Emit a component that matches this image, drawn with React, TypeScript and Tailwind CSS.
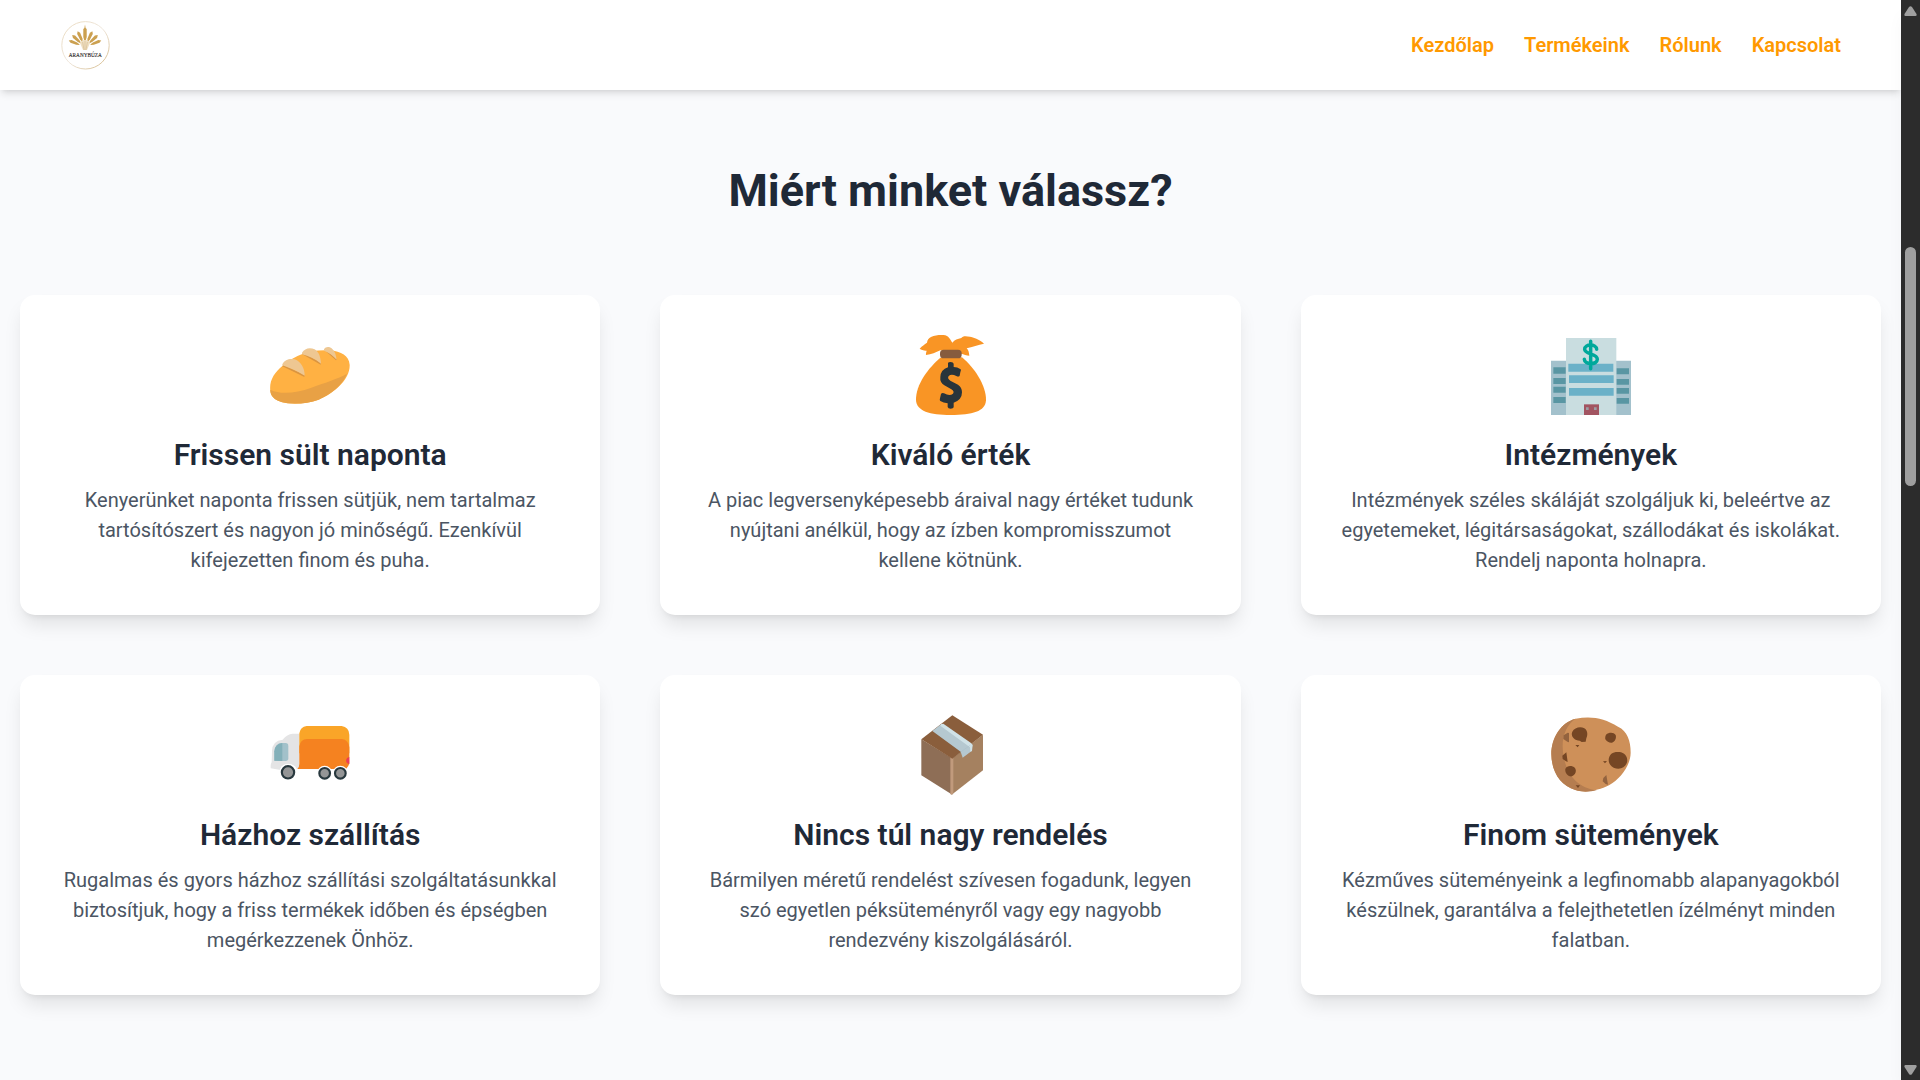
import React from "react";

const Bread = () => (
  <svg className="size-20" viewBox="60 45 240 240">
    <path d="M61 213C57 182 73 158 97 138C121 119 137 109 157 102C180 92 206 90 239 91C274 94 297 108 299 134C301 178 253 220 206 239C148 259 64 256 61 213Z" fill="#FFB143" />
    <path d="M61 209C91 224 137 220 184 203C228 187 262 177 291 161C277 196 242 223 206 239C148 259 59 256 61 209Z" fill="#E8A145" />
    <path d="M97 139L163 171L164 165L100 134ZM157 103L212 134L213 128L160 98ZM223 90L258 121L261 118L228 86Z" fill="#DB9540" />
    <path d="M97 133C105 117 120 115 134 118C153 125 164 144 164 167C140 153 118 143 97 136ZM156 98C164 85 179 81 194 88C208 97 212 113 213 131C195 116 176 109 156 103ZM222 88C227 79 239 79 247 87C255 94 258 106 260 119C249 107 238 98 222 92Z" fill="#EEC792" />
  </svg>
);

const MoneyBag = () => (
  <svg className="size-20" viewBox="60 45 240 240">
    <path d="M151 91C137 97 125 104 108 105C107 100 109 96 110 92C102 93 94 89 89 86C97 77 103 74 111 68C112 60 116 54 123 51C137 45 153 44 166 46C175 48 181 59 187 68C194 59 203 57 214 54C218 47 228 48 240 50C257 54 276 63 282 71C265 75 247 81 230 85C236 90 237 98 238 107C230 107 221 103 213 101Z" fill="#F99525" />
    <path d="M151 113C116 143 77 193 78 240C79 273 119 285 182 285C247 285 286 275 288 241C289 195 251 141 216 112Z" fill="#F99525" />
    <rect x="150" y="89" width="65" height="26" rx="11" fill="#865B3E" />
    <path d="M174 129Q175 126 182 126Q190 126 191 131V141Q202 141 212 148Q214 150 211 157L209 167Q206 172 199 168Q184 161 176 168Q171 176 181 182L204 194Q216 202 216 217Q216 240 191 248V262Q190 266 182 266Q174 266 173 261V250Q160 249 151 243Q148 241 150 235L153 222Q156 217 162 220Q179 229 189 221Q194 214 184 208L163 196Q149 187 151 171Q152 149 174 142Z" fill="#28343B" />
  </svg>
);

const Building = () => (
  <svg className="size-20" viewBox="63 45 240 240">
    <path d="M63 122H108V285H63ZM258 122H303V285H258Z" fill="#A3C1CC" />
    <path d="M108 54H259V285H108Z" fill="#C9DDE0" />
    <path d="M70 142H107V161H70ZM70 174H107V192H70ZM70 200H107V218H70ZM70 231H107V249H70ZM260 145H297V163H260ZM260 177H297V194H260ZM260 204H297V221H260ZM260 234H297V251H260Z" fill="#5996A3" />
    <path d="M115 131H250V155H115ZM117 166H251V189H117ZM117 204H251V227H117Z" fill="#6BB1C8" />
    <path d="M200 88C200 71 163 71 164 88C165 104 202 99 202 118C202 136 163 134 163 118M182 64V146" fill="none" stroke="#00A89B" strokeWidth="10.5" strokeLinecap="round" />
    <path d="M162 253H207V285H162Z" fill="#A25461" />
    <path d="M168 262H176V270H168ZM192 262H200V270H192Z" fill="#9D9DA4" />
  </svg>
);

const Truck = () => (
  <svg className="size-20" viewBox="60 45 240 240">
    <path d="M62 197Q62 191 65 187L66 153Q67 122 98 119Q111 102 128 101H149V206H140Q133 192 114 192Q95 192 92 210L62 205Z" fill="#E4E4E5" />
    <path d="M148 192V100Q151 80 170 78H275Q297 81 298 104V160H148Z" fill="#FAA528" />
    <path d="M142 207Q148 203 148 191V139Q151 118 171 117H276Q295 119 298 142V190Q296 200 288 207Z" fill="#F58220" />
    <path d="M298 171V193Q288 189 288 182Q289 173 298 171Z" fill="#EA3D54" />
    <path d="M73 182V154Q75 131 94 129H107Q115 129 115 139V175Q115 183 107 183Z" fill="#A2C1CA" />
    <path d="M73 182V154Q75 131 97 129V183Z" fill="#83B0B9" />
    <g fill="#fff"><circle cx="114" cy="217" r="26" /><circle cx="224" cy="220" r="23" /><circle cx="271" cy="220" r="23" /></g>
    <g fill="#949596" stroke="#28383E" strokeWidth="6.5"><circle cx="114" cy="217" r="18.5" /><circle cx="224" cy="220" r="16" /><circle cx="271" cy="220" r="16" /></g>
  </svg>
);

const Parcel = () => (
  <svg className="size-20" viewBox="60 45 240 240">
    <path d="M94 118L187 175V284L94 226Z" fill="#8E6E56" />
    <path d="M187 175L279 104V211L185 284Z" fill="#A58160" />
    <path d="M181 172L190 174V280L184 284L181 282Z" fill="#C19A7C" />
    <path d="M94 118L187 46L279 104L187 176Z" fill="#8A5E3C" />
    <path d="M127 93L154 72L247 134L245 153L218 173L212 155Z" fill="#B5C8D0" />
    <path d="M154 72L160 71L243 129L248 135L246 153L241 155L240 142L151 77Z" fill="#D0E2E7" />
    <path d="M212 156L240 136" stroke="#A4B9C1" strokeWidth="1" />
  </svg>
);

const Cookie = () => (
  <svg className="size-20" viewBox="63 45 240 240">
    <path d="M137 56C186 47 223 55 264 80C292 93 302 122 302 158C301 199 271 236 237 256C207 271 169 280 136 270C93 257 65 218 64 163C64 113 93 67 137 56Z" fill="#CE9059" />
    <path d="M137 56C93 67 64 113 64 163C65 218 93 257 136 270C160 278 180 275 201 271C133 264 100 207 98 141C97 103 113 71 137 56Z" fill="#B57D50" />
    <path d="M113 98L101 106L100 117L112 125L117 127V99ZM229 225L220 234L218 244L227 252L234 254Z" fill="#93633F" />
    <path d="M127 95C133 83 151 78 163 85C173 91 174 104 169 115L167 125L155 126L149 122C132 122 121 107 127 95ZM228 104C237 96 251 96 257 105C260 116 255 124 246 128C238 129 231 125 226 118C225 113 226 108 228 104ZM236 180C237 160 252 154 268 156C287 158 296 175 290 190C284 205 267 210 251 203C240 197 236 189 236 180ZM106 207C111 196 126 196 135 204C141 213 136 225 126 229C115 231 104 220 106 207ZM109 157L97 167L98 177L108 184L113 186ZM136 135L148 135L143 142ZM219 184L231 183L225 190ZM137 256L150 256L144 264Z" fill="#754624" />
  </svg>
);

const Logo = () => (
  <svg className="size-[50px]" viewBox="0 0 50 50">
    <defs>
      <linearGradient id="ring" x1="0" y1="0" x2="1" y2="1">
        <stop offset="0" stopColor="#E9D9BC" /><stop offset=".5" stopColor="#EFE7DD" /><stop offset="1" stopColor="#D3B784" />
      </linearGradient>
    </defs>
    <circle cx="25.5" cy="25.3" r="23.7" fill="#fff" stroke="url(#ring)" strokeWidth="1" />
    <g fill="#CBA050">
      {[-68, -47, -25, 0, 25, 47, 68].map((a) => (
        <path key={a} transform={`rotate(${a} 25 27)`} d={a === 0 ? "M25 4.5L25.6 8L26.7 9L26.7 17L25.6 21H24.4L23.3 17L23.3 9L24.4 8Z" : "M25 9.5L26.6 12L26.3 18L25.4 21H24.6L23.7 18L23.4 12Z"} />
      ))}
    </g>
    <path d="M25 20Q29 20 30 23L27 30H23L20 23Q21 20 25 20Z" fill="#EFDFC2" />
    <path d="M25 21V30M22.6 22L24 30M27.4 22L26 30" stroke="#CDB080" strokeWidth=".5" />
    <text x="25.3" y="37.4" textAnchor="middle" textLength="33" lengthAdjust="spacingAndGlyphs" fontFamily="Liberation Serif, serif" fontSize="6.6" fill="#2f2a28" stroke="#2f2a28" strokeWidth=".15">ARANYBÚZA</text>
  </svg>
);

const features = [
  { Icon: Bread, title: "Frissen sült naponta", lines: ["Kenyerünket naponta frissen sütjük, nem tartalmaz", "tartósítószert és nagyon jó minőségű. Ezenkívül", "kifejezetten finom és puha."] },
  { Icon: MoneyBag, title: "Kiváló érték", lines: ["A piac legversenyképesebb áraival nagy értéket tudunk", "nyújtani anélkül, hogy az ízben kompromisszumot", "kellene kötnünk."] },
  { Icon: Building, title: "Intézmények", lines: ["Intézmények széles skáláját szolgáljuk ki, beleértve az", "egyetemeket, légitársaságokat, szállodákat és iskolákat.", "Rendelj naponta holnapra."] },
  { Icon: Truck, title: "Házhoz szállítás", lines: ["Rugalmas és gyors házhoz szállítási szolgáltatásunkkal", "biztosítjuk, hogy a friss termékek időben és épségben", "megérkezzenek Önhöz."] },
  { Icon: Parcel, title: "Nincs túl nagy rendelés", lines: ["Bármilyen méretű rendelést szívesen fogadunk, legyen", "szó egyetlen péksüteményről vagy egy nagyobb", "rendezvény kiszolgálásáról."] },
  { Icon: Cookie, title: "Finom sütemények", lines: ["Kézműves süteményeink a legfinomabb alapanyagokból", "készülnek, garantálva a felejthetetlen ízélményt minden", "falatban."] },
];

export default function App() {
  return (
    <div className="flex h-[1080px] w-[1920px] overflow-hidden bg-[#f9fafc] font-['Roboto',sans-serif]">
      <div className="flex min-w-0 flex-1 flex-col">
        <header className="z-10 flex h-[90px] shrink-0 items-center justify-between bg-white px-[60px] shadow-[0_5px_7.5px_-1.25px_rgba(0,0,0,0.1),0_2.5px_5px_-2.5px_rgba(0,0,0,0.1)]">
          <Logo />
          <nav className="flex gap-[30px] text-[20px] leading-[30px] font-semibold text-[#ff9900]">
            <a>Kezdőlap</a>
            <a>Termékeink</a>
            <a>Rólunk</a>
            <a>Kapcsolat</a>
          </nav>
        </header>
        <main className="px-5 pt-[76px]">
          <h2 className="text-center text-[45px] leading-[50px] font-bold text-[#1f2937]">Miért minket válassz?</h2>
          <div className="mt-[79px] grid grid-cols-3 gap-[60px]">
            {features.map(({ Icon, title, lines }) => (
              <article key={title} className="flex h-80 flex-col items-center rounded-[15px] bg-white pt-10 text-center shadow-[0_12.5px_18.75px_-3.75px_rgba(0,0,0,0.1),0_5px_7.5px_-5px_rgba(0,0,0,0.1)]">
                <Icon />
                <h3 className="mt-5 text-[30px] leading-10 font-semibold text-[#1f2937]">{title}</h3>
                <p className="mt-2.5 text-[20px] leading-[30px] whitespace-nowrap text-[#4b5563]">
                  {lines.map((line) => (
                    <span key={line} className="block">{line}</span>
                  ))}
                </p>
              </article>
            ))}
          </div>
        </main>
      </div>
      <aside className="z-20 flex w-[19px] flex-col items-center bg-[#2c2c2c] shadow-[0_12px_19px_-4px_rgba(0,0,0,0.06)]">
        <svg className="mt-1.5 h-[10px] w-[13px] shrink-0" viewBox="0 0 13 10"><path d="M5 1Q6.5 -.7 8 1L12.5 8Q13 10 11.5 10H1.5Q0 10 .5 8Z" fill="#9f9f9f" /></svg>
        <div className="mt-[231px] h-[239px] w-[11px] shrink-0 rounded-full bg-[#9f9f9f]" />
        <svg className="mt-auto mb-[5px] h-[10px] w-[13px] shrink-0" viewBox="0 0 13 10"><path d="M5 9Q6.5 10.7 8 9L12.5 2Q13 0 11.5 0H1.5Q0 0 .5 2Z" fill="#9f9f9f" /></svg>
      </aside>
    </div>
  );
}
